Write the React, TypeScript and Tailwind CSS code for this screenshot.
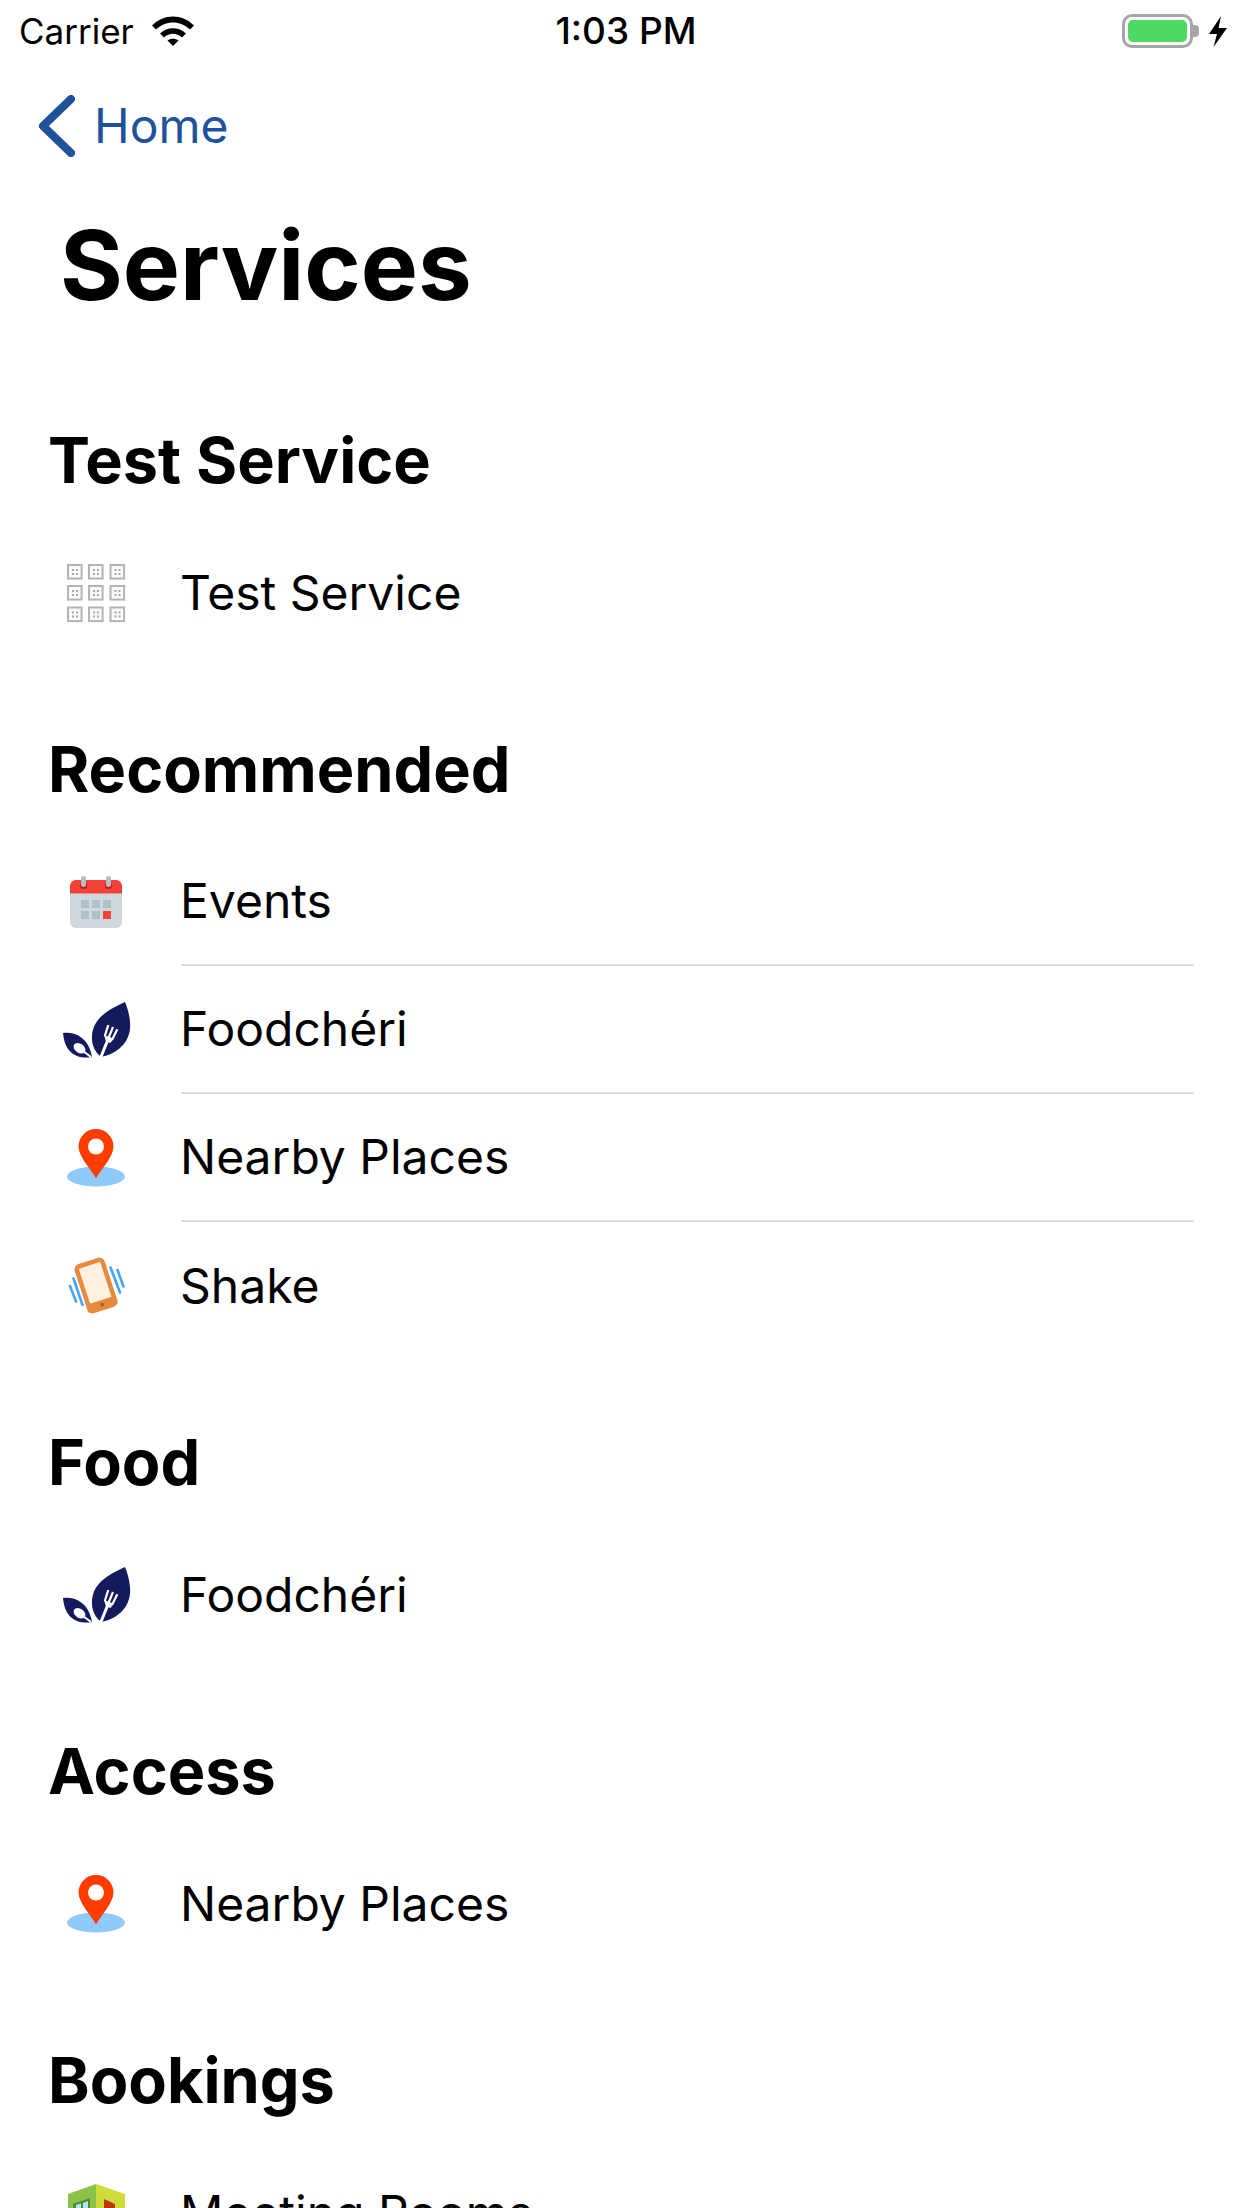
const font = { fontFamily: 'Inter, "Liberation Sans", sans-serif' }

function GridIcon() {
  const cells = [7, 28, 49.5]
  return (
    <svg viewBox="0 0 72 72" className="w-full h-full">
      {cells.map(y =>
        cells.map(x => (
          <g key={`${x}-${y}`}>
            <rect x={x + 1} y={y + 1} width="13.6" height="13.6" fill="#fafafa" stroke="#b4b4b4" strokeWidth="2" />
            <rect x={x + 5} y={y + 5} width="2" height="2" fill="#a8a8a8" />
            <rect x={x + 9} y={y + 5} width="2" height="2" fill="#a8a8a8" />
            <rect x={x + 5} y={y + 9} width="2" height="2" fill="#a8a8a8" />
            <rect x={x + 9} y={y + 9} width="2" height="2" fill="#a8a8a8" />
          </g>
        )),
      )}
    </svg>
  )
}

function CalendarIcon() {
  return (
    <svg viewBox="0 0 72 72" className="w-full h-full">
      <rect x="10" y="14" width="52" height="48" rx="6" fill="#cfd8dc" />
      <path d="M10 27.5V20a6 6 0 0 1 6-6h40a6 6 0 0 1 6 6v7.5z" fill="#f44336" />
      <circle cx="23.5" cy="19.5" r="3.6" fill="#b71c1c" />
      <circle cx="48.5" cy="19.5" r="3.6" fill="#b71c1c" />
      <rect x="21" y="10" width="5" height="11" rx="2.5" fill="#b0bec5" />
      <rect x="46" y="10" width="5" height="11" rx="2.5" fill="#b0bec5" />
      <rect x="21" y="34" width="8" height="8" fill="#b0bec5" />
      <rect x="32" y="34" width="8" height="8" fill="#b0bec5" />
      <rect x="43" y="34" width="8" height="8" fill="#b0bec5" />
      <rect x="21" y="45" width="8" height="8" fill="#b0bec5" />
      <rect x="32" y="45" width="8" height="8" fill="#b0bec5" />
      <rect x="43" y="45" width="8" height="8" fill="#f44336" />
    </svg>
  )
}

function LeafIcon() {
  return (
    <svg viewBox="0 0 72 72" className="w-full h-full">
      <path d="M65 8C50 15 31 24 32 45C32 52 36 59 41 63C58 60 72 47 70 28C69.500 20 67 13 65 8Z" fill="#151a5c" />
      <path d="M3 39C14 38 28 42 32 63C20 65 5 62 3 39Z" fill="#151a5c" />
      <path d="M40.500 64L48 45.500" stroke="#fff" strokeWidth="3" />
      <path d="M48.300 31L44.800 42M53 33L48.500 44M57.300 35.300L52 46" stroke="#fff" strokeWidth="2.200" fill="none" />
      <path d="M44 41L53.500 44.500L50.500 49L46 47.500Z" fill="#fff" />
      <ellipse cx="19.500" cy="54.300" rx="6.500" ry="4.500" transform="rotate(35 19.500 54.300)" fill="#fff" />
      <path d="M23 57L31 63" stroke="#fff" strokeWidth="2" />
    </svg>
  )
}

function PinIcon() {
  return (
    <svg viewBox="0 0 72 72" className="w-full h-full">
      <ellipse cx="36" cy="54.500" rx="29" ry="10" fill="#90caf9" />
      <path d="M36 56.500C31 47 18.500 35 18.500 24.500A17.500 17.500 0 0 1 53.500 24.500C53.500 35 41 47 36 56.500Z" fill="#ff3d00" />
      <circle cx="36" cy="24.500" r="8" fill="#fff" />
    </svg>
  )
}

function ShakeIcon() {
  return (
    <svg viewBox="0 0 72 72" className="w-full h-full">
      <path d="M13.500 28.500L22.500 55M10 36L16 51.500M50.500 17.500L60 42.500M57.500 20L63.500 36.500" stroke="#42a5f5" strokeWidth="2.600" strokeLinecap="round" />
      <g transform="rotate(-18 36 35.500)">
        <rect x="22.500" y="12" width="27" height="47" rx="3.500" fill="#fff0df" stroke="#e68a3b" strokeWidth="4.500" />
        <rect x="20.500" y="51" width="31" height="9" rx="3" fill="#e68a3b" />
        <circle cx="36" cy="55.500" r="1.800" fill="#a5612c" />
      </g>
    </svg>
  )
}

function RoomsIcon() {
  return (
    <svg viewBox="0 0 72 72" className="w-full h-full">
      <path d="M36 7L8 17V62L36 68Z" fill="#8bc34a" />
      <path d="M36 7L65 17V62L36 68Z" fill="#cddc39" />
      <path d="M13 27L30 21V60L13 57Z" fill="#558b2f" />
      <path d="M16 28L21 26.500V50L16 50ZM23 26L28 24V50L23 50Z" fill="#b3e5fc" />
      <path d="M44 22L55 27V60L44 62Z" fill="#bf360c" />
    </svg>
  )
}

function Row({ icon, label, divider }: { icon: React.ReactNode; label: string; divider?: boolean }) {
  return (
    <div className="flex h-[128px] pl-[60px] pr-[48px]">
      <div className="w-[72px] flex items-center shrink-0">
        <div className="w-[72px] h-[72px]">{icon}</div>
      </div>
      <div className={`flex-1 ml-[49px] flex items-center text-[48px] text-black ${divider ? 'border-b-2 border-[#dddddd]' : ''}`}>
        <span className="-ml-px">{label}</span>
      </div>
    </div>
  )
}

function Section({ title, children }: { title: string; children: React.ReactNode }) {
  return (
    <section className="mb-[61px]">
      <h2 className="h-[120px] pl-[48px] pt-[14px] text-[63px] leading-[74px] font-bold text-black">{title}</h2>
      <div>{children}</div>
    </section>
  )
}

export default function App() {
  return (
    <div className="w-[1242px] h-[2208px] overflow-hidden bg-white" style={font}>
      <div className="grid grid-cols-3 items-center h-[62px] text-black">
        <div className="flex items-center pl-[19px] gap-[18px] text-[35px]">
          <span>Carrier</span>
          <svg viewBox="0 0 42 30" className="w-[42px] h-[30px]">
            <path d="M0 9.500C12 -2.500 30 -2.500 42 9.500L38 13.500C28 4 14 4 4 13.500Z" fill="#000" />
            <path d="M8 17.500C15 10.500 27 10.500 34 17.500L30 21.500C24.500 16.500 17.500 16.500 12 21.500Z" fill="#000" />
            <path d="M15.500 24.500C18.500 22 23.500 22 26.500 24.500L21 30Z" fill="#000" />
          </svg>
        </div>
        <div className="text-center pl-[10px] text-[37px] font-medium">1:03 PM</div>
        <div className="flex items-center justify-end pr-[15px]">
          <div className="w-[71px] h-[34px] rounded-[10px] border-[3px] border-[#a6a6a6] p-[3px]">
            <div className="w-full h-full rounded-[5px] bg-[#4cd964]" />
          </div>
          <div className="w-[6px] h-[12px] bg-[#a6a6a6] rounded-r-[4px]" />
          <svg viewBox="0 0 18 31" className="w-[18px] h-[31px] ml-[10px]">
            <path d="M12 0L0 18H8L4.500 31L18 12H9.500Z" fill="#000" />
          </svg>
        </div>
      </div>
      <div className="flex items-center h-[128px] pl-[38px] text-[#1f5298]">
        <svg viewBox="0 0 37 62" className="w-[37px] h-[62px]">
          <path d="M33 4L5 31L33 58" fill="none" stroke="#1f5298" strokeWidth="8" strokeLinecap="round" strokeLinejoin="round" />
        </svg>
        <span className="ml-[19px] text-[48px]">Home</span>
      </div>
      <h1 className="pl-[60px] h-[219px] text-[96px] leading-[150px] font-bold text-black">Services</h1>
      <Section title="Test Service">
        <Row icon={<GridIcon />} label="Test Service" />
      </Section>
      <Section title="Recommended">
        <Row icon={<CalendarIcon />} label="Events" divider />
        <Row icon={<LeafIcon />} label="Foodchéri" divider />
        <Row icon={<PinIcon />} label="Nearby Places" divider />
        <Row icon={<ShakeIcon />} label="Shake" />
      </Section>
      <Section title="Food">
        <Row icon={<LeafIcon />} label="Foodchéri" />
      </Section>
      <Section title="Access">
        <Row icon={<PinIcon />} label="Nearby Places" />
      </Section>
      <Section title="Bookings">
        <Row icon={<RoomsIcon />} label="Meeting Rooms" />
      </Section>
    </div>
  )
}
